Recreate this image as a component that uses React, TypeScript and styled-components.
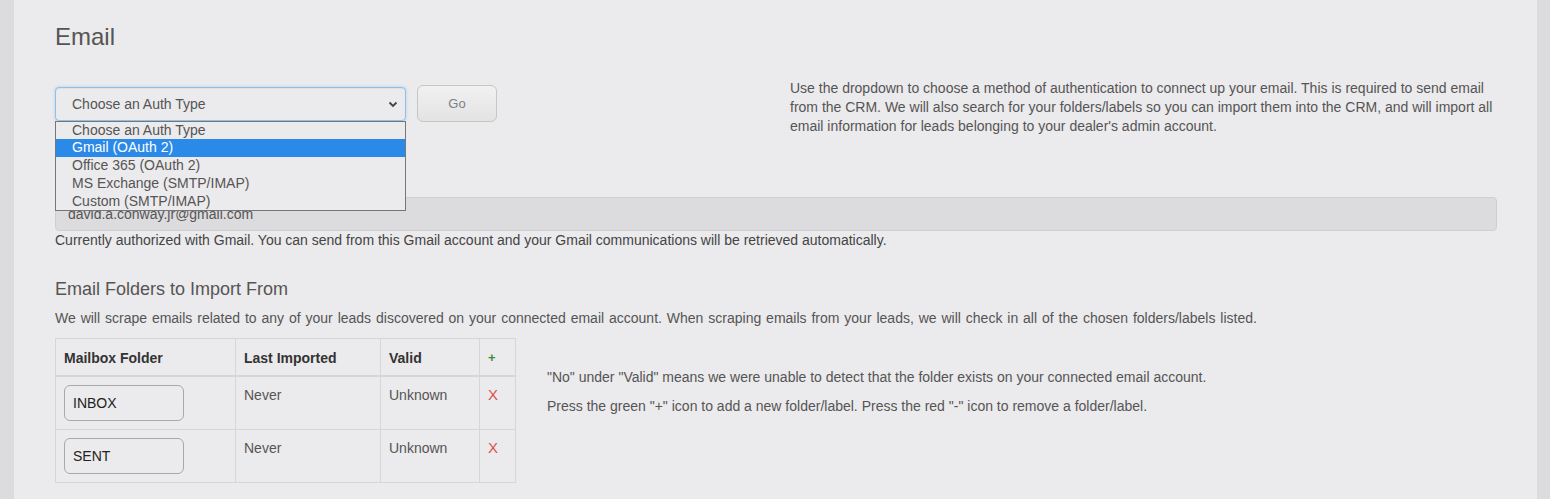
import React from "react";
import styled, { createGlobalStyle } from "styled-components";

const Global = createGlobalStyle`
  html, body { margin: 0; padding: 0; }
  body {
    background: #dcdbdd;
    font-family: "Liberation Sans", Arial, sans-serif;
    color: #555;
  }
  * { box-sizing: border-box; }
`;

const Shell = styled.div`
  display: flex;
  height: 499px;
  overflow: hidden;
  padding: 0 13px 0 14px;
`;

const Panel = styled.main`
  flex: 1;
  background: #ebeaec;
  padding: 24px 40px 0 41px;
`;

const Title = styled.h1`
  margin: 0;
  font-size: 24px;
  line-height: 26px;
  font-weight: normal;
  color: #555;
`;

const TopRow = styled.div`
  display: grid;
  grid-template-columns: 735px 1fr;
  margin-top: 29px;
`;

const AuthControls = styled.div`
  display: flex;
  align-items: center;
  gap: 11px;
  margin-top: 6px;
  align-self: start;
`;

const SelectWrap = styled.div`
  position: relative;
  width: 351px;
`;

const SelectBox = styled.div`
  height: 34px;
  border: 1px solid #8fc0ea;
  border-radius: 4px;
  box-shadow: 0 0 3px rgba(102, 175, 233, 0.45), inset 0 1px 1px rgba(0, 0, 0, 0.05);
  display: flex;
  align-items: center;
  justify-content: space-between;
  padding: 0 6px 0 16px;
  font-size: 14px;
  color: #555;
  background: #ebeaec;
`;

const Listbox = styled.ul`
  position: absolute;
  top: 34px;
  left: 0;
  width: 100%;
  margin: 0;
  padding: 0;
  list-style: none;
  border: 1px solid #767676;
  background: #ebeaec;
  font-size: 14px;
  color: #555;
  z-index: 5;
`;

const Option = styled.li<{ $selected?: boolean }>`
  height: 17.8px;
  line-height: 17.8px;
  padding-left: 16px;
  white-space: nowrap;
  background: ${(p) => (p.$selected ? "#2b8ae8" : "transparent")};
  color: ${(p) => (p.$selected ? "#fff" : "#555")};
`;

const GoButton = styled.button`
  width: 80px;
  height: 37px;
  border: 1px solid #c6c6c6;
  border-radius: 6px;
  background: linear-gradient(#f1f1f2, #e3e3e4);
  color: #808080;
  font-family: inherit;
  font-size: 13px;
  padding: 0;
`;

const Description = styled.p`
  margin: 0;
  font-size: 14px;
  line-height: 19px;
  color: #555;
  max-width: 712px;
`;

const EmailField = styled.div`
  margin-top: 61px;
  height: 34px;
  border: 1px solid #cfcfd1;
  border-radius: 4px;
  background: #dcdbdd;
  display: flex;
  align-items: center;
  padding: 0 12px;
  font-size: 14px;
  color: #555;
`;

const Help = styled.p`
  margin: 1px 0 0;
  font-size: 14px;
  line-height: 16px;
  color: #444;
`;

const SubTitle = styled.h2`
  margin: 30px 0 0;
  font-size: 18px;
  line-height: 22px;
  font-weight: normal;
  color: #555;
`;

const Para = styled.p`
  margin: 9px 0 0;
  font-size: 14px;
  line-height: 18px;
  color: #555;
  word-spacing: 1px;
`;

const FolderRow = styled.div`
  display: flex;
  align-items: flex-start;
  gap: 31px;
  margin-top: 11px;
`;

const Table = styled.table`
  border-collapse: collapse;
  table-layout: fixed;
  width: 460px;
  font-size: 14px;
  border: 1px solid #d6d6d6;
`;

const Th = styled.th<{ $w: number }>`
  width: ${(p) => p.$w}px;
  text-align: left;
  padding: 8px 8px 7px;
  line-height: 20px;
  font-weight: bold;
  color: #333;
  border: 1px solid #d6d6d6;
  border-bottom: 2px solid #d6d6d6;
  vertical-align: bottom;
`;

const Td = styled.td`
  padding: 8px;
  line-height: 20px;
  color: #555;
  border: 1px solid #d6d6d6;
  vertical-align: top;
`;

const FolderInput = styled.input`
  display: block;
  width: 120px;
  height: 36px;
  border: 1px solid #a9a9a9;
  border-radius: 6px;
  background: transparent;
  padding: 0 8px;
  font-family: inherit;
  font-size: 14px;
  color: #222;
  outline: none;
`;

const Add = styled.span`
  color: #3c8d3c;
  font-weight: bold;
  font-size: 13px;
`;

const Remove = styled.span`
  color: #d9534f;
  font-size: 15px;
`;

const Notes = styled.div`
  display: flex;
  flex-direction: column;
  gap: 11px;
  margin-top: 30px;
  font-size: 14px;
  line-height: 18px;
  color: #555;
`;

const Chevron = () => (
  <svg width="12" height="12" viewBox="0 0 12 12">
    <path d="M2.5 4.5 L6 8 L9.5 4.5" fill="none" stroke="#444" strokeWidth="1.8" />
  </svg>
);

const options = [
  "Choose an Auth Type",
  "Gmail (OAuth 2)",
  "Office 365 (OAuth 2)",
  "MS Exchange (SMTP/IMAP)",
  "Custom (SMTP/IMAP)",
];

const folders = ["INBOX", "SENT"];

export default function App() {
  return (
    <>
      <Global />
      <Shell>
        <Panel>
          <Title>Email</Title>
          <TopRow>
            <AuthControls>
              <SelectWrap>
                <SelectBox>
                  <span>Choose an Auth Type</span>
                  <Chevron />
                </SelectBox>
                <Listbox>
                  {options.map((o, i) => (
                    <Option key={o} $selected={i === 1}>
                      {o}
                    </Option>
                  ))}
                </Listbox>
              </SelectWrap>
              <GoButton>Go</GoButton>
            </AuthControls>
            <Description>
              Use the dropdown to choose a method of authentication to connect up your email. This is
              required to send email from the CRM. We will also search for your folders/labels so you
              can import them into the CRM, and will import all email information for leads belonging to
              your dealer's admin account.
            </Description>
          </TopRow>
          <EmailField>david.a.conway.jr@gmail.com</EmailField>
          <Help>
            Currently authorized with Gmail. You can send from this Gmail account and your Gmail
            communications will be retrieved automatically.
          </Help>
          <SubTitle>Email Folders to Import From</SubTitle>
          <Para>
            We will scrape emails related to any of your leads discovered on your connected email
            account. When scraping emails from your leads, we will check in all of the chosen
            folders/labels listed.
          </Para>
          <FolderRow>
            <Table>
              <thead>
                <tr>
                  <Th $w={180}>Mailbox Folder</Th>
                  <Th $w={145}>Last Imported</Th>
                  <Th $w={99}>Valid</Th>
                  <Th $w={36}>
                    <Add>+</Add>
                  </Th>
                </tr>
              </thead>
              <tbody>
                {folders.map((f) => (
                  <tr key={f}>
                    <Td>
                      <FolderInput readOnly value={f} />
                    </Td>
                    <Td>Never</Td>
                    <Td>Unknown</Td>
                    <Td>
                      <Remove>X</Remove>
                    </Td>
                  </tr>
                ))}
              </tbody>
            </Table>
            <Notes>
              <span>"No" under "Valid" means we were unable to detect that the folder exists on your connected email account.</span>
              <span>Press the green "+" icon to add a new folder/label. Press the red "-" icon to remove a folder/label.</span>
            </Notes>
          </FolderRow>
        </Panel>
      </Shell>
    </>
  );
}
